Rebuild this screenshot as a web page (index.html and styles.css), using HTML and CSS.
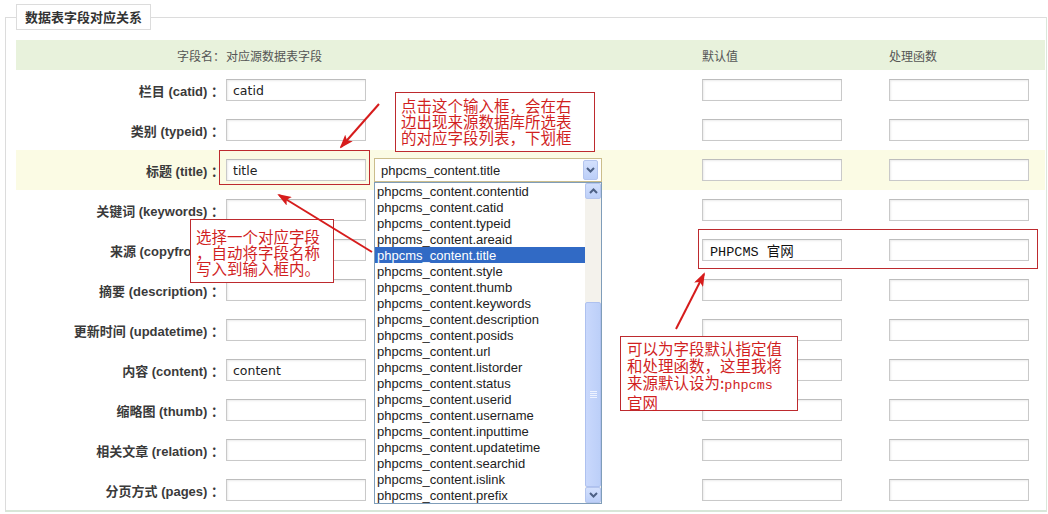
FILE: index.html
```html
<!DOCTYPE html>
<html lang="zh-CN">
<head>
    <meta charset="UTF-8">
    <title>数据表字段对应关系</title>
    <link rel="stylesheet" href="styles.css">
</head>
<body>
    <fieldset class="panel">
        <legend>数据表字段对应关系</legend>

        <div class="map-head">
            <div class="col-label">字段名：</div>
            <div>对应源数据表字段</div>
            <div>默认值</div>
            <div>处理函数</div>
        </div>

        <div class="map-row">
            <label class="col-label">栏目 (catid) ：</label>
            <div class="col-src"><input class="ipt" type="text" value="catid"></div>
            <div><input class="ipt" type="text"></div>
            <div><input class="ipt" type="text"></div>
        </div>
        <div class="map-row">
            <label class="col-label">类别 (typeid) ：</label>
            <div class="col-src"><input class="ipt" type="text"></div>
            <div><input class="ipt" type="text"></div>
            <div><input class="ipt" type="text"></div>
        </div>
        <div class="map-row is-active">
            <label class="col-label">标题 (title) ：</label>
            <div class="col-src">
                <input class="ipt" type="text" value="title">
                <div class="picker">
                    <div class="picker-box">
                        <span>phpcms_content.title</span>
                        <span class="sb-btn picker-arrow">
                            <svg width="9" height="6" viewBox="0 0 9 6"><path d="M1 1 L4.5 4.5 L8 1" fill="none" stroke="#4d6185" stroke-width="2"/></svg>
                        </span>
                    </div>
                    <div class="picker-list">
                        <ul class="picker-items">
                            <li>phpcms_content.contentid</li>
                            <li>phpcms_content.catid</li>
                            <li>phpcms_content.typeid</li>
                            <li>phpcms_content.areaid</li>
                            <li class="is-selected">phpcms_content.title</li>
                            <li>phpcms_content.style</li>
                            <li>phpcms_content.thumb</li>
                            <li>phpcms_content.keywords</li>
                            <li>phpcms_content.description</li>
                            <li>phpcms_content.posids</li>
                            <li>phpcms_content.url</li>
                            <li>phpcms_content.listorder</li>
                            <li>phpcms_content.status</li>
                            <li>phpcms_content.userid</li>
                            <li>phpcms_content.username</li>
                            <li>phpcms_content.inputtime</li>
                            <li>phpcms_content.updatetime</li>
                            <li>phpcms_content.searchid</li>
                            <li>phpcms_content.islink</li>
                            <li>phpcms_content.prefix</li>
                        </ul>
                        <div class="scrollbar">
                            <span class="sb-btn">
                                <svg width="9" height="6" viewBox="0 0 9 6"><path d="M1 5 L4.5 1.5 L8 5" fill="none" stroke="#4d6185" stroke-width="2"/></svg>
                            </span>
                            <span class="sb-track"></span>
                            <span class="sb-thumb"><i></i><i></i><i></i><i></i></span>
                            <span class="sb-btn">
                                <svg width="9" height="6" viewBox="0 0 9 6"><path d="M1 1 L4.5 4.5 L8 1" fill="none" stroke="#4d6185" stroke-width="2"/></svg>
                            </span>
                        </div>
                    </div>
                </div>
            </div>
            <div><input class="ipt" type="text"></div>
            <div><input class="ipt" type="text"></div>
        </div>
        <div class="map-row">
            <label class="col-label">关键词 (keywords) ：</label>
            <div class="col-src"><input class="ipt" type="text"></div>
            <div><input class="ipt" type="text"></div>
            <div><input class="ipt" type="text"></div>
        </div>
        <div class="map-row">
            <label class="col-label">来源 (copyfrom) ：</label>
            <div class="col-src"><input class="ipt" type="text"></div>
            <div><input class="ipt ipt-song" type="text" value="PHPCMS 官网"></div>
            <div><input class="ipt" type="text"></div>
        </div>
        <div class="map-row">
            <label class="col-label">摘要 (description) ：</label>
            <div class="col-src"><input class="ipt" type="text"></div>
            <div><input class="ipt" type="text"></div>
            <div><input class="ipt" type="text"></div>
        </div>
        <div class="map-row">
            <label class="col-label">更新时间 (updatetime) ：</label>
            <div class="col-src"><input class="ipt" type="text"></div>
            <div><input class="ipt" type="text"></div>
            <div><input class="ipt" type="text"></div>
        </div>
        <div class="map-row">
            <label class="col-label">内容 (content) ：</label>
            <div class="col-src"><input class="ipt" type="text" value="content"></div>
            <div><input class="ipt" type="text"></div>
            <div><input class="ipt" type="text"></div>
        </div>
        <div class="map-row">
            <label class="col-label">缩略图 (thumb) ：</label>
            <div class="col-src"><input class="ipt" type="text"></div>
            <div><input class="ipt" type="text"></div>
            <div><input class="ipt" type="text"></div>
        </div>
        <div class="map-row">
            <label class="col-label">相关文章 (relation) ：</label>
            <div class="col-src"><input class="ipt" type="text"></div>
            <div><input class="ipt" type="text"></div>
            <div><input class="ipt" type="text"></div>
        </div>
        <div class="map-row">
            <label class="col-label">分页方式 (pages) ：</label>
            <div class="col-src"><input class="ipt" type="text"></div>
            <div><input class="ipt" type="text"></div>
            <div><input class="ipt" type="text"></div>
        </div>
    </fieldset>

    <!-- callouts -->
    <div class="mark mark-title"></div>
    <div class="mark mark-default"></div>
    <div class="note note-click">点击这个输入框，会在右<br>边出现来源数据库所选表<br>的对应字段列表，下划框</div>
    <div class="note note-pick">选择一个对应字段<br>，自动将字段名称<br>写入到输入框内。</div>
    <div class="note note-default">可以为字段默认指定值<br>和处理函数，这里我将<br>来源默认设为:<span class="latin">phpcms</span><br>官网</div>

    <svg class="arrows" width="1048" height="514" viewBox="0 0 1048 514">
        <defs>
            <marker id="head" markerWidth="14" markerHeight="10" refX="12" refY="5" orient="auto" markerUnits="userSpaceOnUse">
                <path d="M0 0 L14 5 L0 10 L3 5 Z" fill="#d61c1c"/>
            </marker>
        </defs>
        <line x1="379" y1="104" x2="341" y2="147" stroke="#d61c1c" stroke-width="2" marker-end="url(#head)"/>
        <line x1="372" y1="252" x2="279" y2="195" stroke="#d61c1c" stroke-width="2" marker-end="url(#head)"/>
        <line x1="676" y1="329" x2="704" y2="274" stroke="#d61c1c" stroke-width="2" marker-end="url(#head)"/>
    </svg>
</body>
</html>
```

FILE: styles.css
```css
body {
    margin: 0;
    background: #fff;
    font-family: "Liberation Sans", "Noto Sans CJK SC", sans-serif;
    color: #333;
}
.panel {
    margin: 4px 1px 0 5px;
    padding: 10px 0 0 10px;
    border: 1px solid #dcdcdc;
    border-right-color: #dbe7db;
    border-bottom: 2px solid #d8e6d8;
}
.panel legend {
    padding: 0 8px;
    height: 26px;
    line-height: 24px;
    box-sizing: border-box;
    border: 1px solid #dcdcdc;
    background: #fff;
    font-family: "Noto Sans CJK SC", sans-serif;
    font-size: 13px;
    font-weight: bold;
    color: #333;
}
.map-head,
.map-row {
    display: grid;
    grid-template-columns: 210px 476px 187px 1fr;
    align-items: center;
    margin-right: 1px;
}
.map-head {
    height: 30px;
    background: #e8f2dc;
    font-family: "Noto Sans CJK SC", sans-serif;
    font-size: 12px;
    color: #555;
}
.map-head .col-label {
    padding-right: 1px;
}
.map-row {
    height: 40px;
}
.map-row.is-active {
    background: #fbfbe4;
}
.col-label {
    text-align: right;
    white-space: nowrap;
}
.map-row .col-label {
    padding-right: 2px;
    font-size: 13px;
    font-weight: bold;
    color: #3a3a3a;
}
.col-src {
    display: flex;
    align-items: center;
}
.ipt {
    width: 140px;
    height: 22px;
    box-sizing: border-box;
    margin: 0;
    padding: 0 6px;
    border: 1px solid #c9c9c9;
    border-top-color: #bdbdbd;
    box-shadow: inset 1px 1px 2px #ececec;
    background: #fff;
    font-family: "DejaVu Sans", sans-serif;
    font-size: 12.5px;
    color: #222;
    outline: none;
}
.ipt-song {
    padding-left: 7px;
    font-family: "Liberation Mono", "Noto Sans CJK SC", monospace;
    font-size: 13.5px;
    color: #111;
}

/* open select with its option list */
.picker {
    position: relative;
    margin-left: 8px;
}
.picker-box {
    width: 228px;
    height: 24px;
    box-sizing: border-box;
    display: flex;
    align-items: center;
    justify-content: space-between;
    padding: 0 3px 0 6px;
    border: 1px solid #cbbd8c;
    background: #fff;
    font-size: 13px;
    color: #222;
}
.sb-btn {
    display: flex;
    align-items: center;
    justify-content: center;
    width: 16px;
    height: 16px;
    box-sizing: border-box;
    border: 1px solid #b4c5ee;
    border-radius: 2px;
    background: linear-gradient(#d3e0fd, #bccff8);
}
.picker-arrow {
    width: 15px;
    height: 20px;
}
.picker-list {
    position: absolute;
    top: 24px;
    left: 0;
    z-index: 2;
    width: 228px;
    height: 322px;
    box-sizing: border-box;
    display: flex;
    border: 1px solid #7f9db9;
    background: #fff;
}
.picker-items {
    flex: 1;
    margin: 0;
    padding: 0;
    list-style: none;
    font-size: 13px;
    color: #222;
}
.picker-items li {
    height: 16px;
    line-height: 17px;
    padding-left: 2px;
    white-space: nowrap;
}
.picker-items li.is-selected {
    background: #316ac5;
    color: #fff;
}
.scrollbar {
    width: 16px;
    display: flex;
    flex-direction: column;
    background: #f4f2ec;
}
.sb-track {
    flex: 0 0 103px;
}
.sb-thumb {
    flex: 1;
    display: flex;
    flex-direction: column;
    align-items: center;
    justify-content: center;
    gap: 1px;
    border: 1px solid #aec1ef;
    border-radius: 2px;
    background: linear-gradient(90deg, #c9d8fc, #bccff8);
}
.sb-thumb i {
    width: 7px;
    height: 1px;
    background: #eef3ff;
}

/* red callouts drawn over the form */
.mark,
.note {
    position: absolute;
    box-sizing: border-box;
    border: 1px solid #bd2a2e;
}
.mark-title {
    left: 219px;
    top: 150px;
    width: 151px;
    height: 35px;
}
.mark-default {
    left: 698px;
    top: 229px;
    width: 340px;
    height: 40px;
}
.note {
    z-index: 3;
    background: #fff;
    font-family: "Noto Sans CJK SC", sans-serif;
    font-size: 15.5px;
    line-height: 16px;
    color: #d11f1f;
    white-space: nowrap;
}
.note-click {
    left: 395px;
    top: 92px;
    width: 200px;
    height: 60px;
    padding: 4px 5px;
}
.note-pick {
    left: 190px;
    top: 219px;
    width: 144px;
    height: 64px;
    padding: 8px 5px;
}
.note-default {
    left: 620px;
    top: 336px;
    width: 178px;
    height: 75px;
    padding: 3px 6px;
    line-height: 17px;
}
.note .latin {
    font-family: "Liberation Mono", monospace;
    font-size: 13.5px;
}
.arrows {
    position: absolute;
    left: 0;
    top: 0;
    z-index: 4;
    pointer-events: none;
}
```
